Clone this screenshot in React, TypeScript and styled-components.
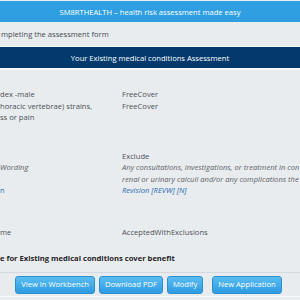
import React from 'react';
import styled, { createGlobalStyle } from 'styled-components';

const GlobalStyle = createGlobalStyle`
  html, body {
    margin: 0;
    padding: 0;
    background: #ffffff;
  }
  body {
    font-family: "Open Sans", "Noto Sans", sans-serif;
  }
`

const Page = styled.div`
  width: 300px;
  height: 300px;
  overflow: hidden;
  padding-top: 1px;
  box-sizing: border-box;
  background: #e9ecef;
  display: flex;
  flex-direction: column;
  font-size: 7.6px;
  color: #4b5055;
`

const Banner = styled.div`
  height: 21px;
  flex-shrink: 0;
  background: #2f9fe1;
  color: #ffffff;
  display: flex;
  align-items: center;
  justify-content: center;
  white-space: nowrap;
`

const Intro = styled.div`
  height: 24px;
  flex-shrink: 0;
  display: flex;
  align-items: center;
  padding-left: 1px;
  white-space: nowrap;
  color: #464b50;
  border-bottom: 1px solid #f4f6f8;
`

const SectionTitle = styled.div`
  height: 21px;
  flex-shrink: 0;
  background: #033a6d;
  color: #ffffff;
  display: flex;
  align-items: center;
  justify-content: center;
  white-space: nowrap;
  border-bottom: 2px solid #f4f6f8;
`

const Details = styled.div`
  flex-shrink: 0;
  display: grid;
  grid-template-columns: 122px 1fr;
  grid-auto-rows: minmax(11.5px, auto);
  line-height: 11.5px;
  padding-top: 19px;
  white-space: nowrap;
`

const Spacer = styled.div<{ $h: number }>`
  grid-column: 1 / -1;
  height: ${(p) => p.$h}px;
`

const Cell = styled.div<{ $italic?: boolean; $link?: boolean }>`
  font-style: ${(p) => (p.$italic ? 'italic' : 'normal')};
  color: ${(p) => (p.$link ? '#2a69b0' : p.$italic ? '#5d6267' : '#4b5055')};
`

const Summary = styled.div`
  flex-shrink: 0;
  margin-top: 14px;
  font-weight: 700;
  color: #1f2327;
  white-space: nowrap;
  line-height: 12px;
`

const Footer = styled.div`
  flex-shrink: 0;
  margin-top: 8px;
  border-top: 1px solid #d6dade;
  border-bottom: 1px solid #f7f8f9;
  display: flex;
  justify-content: center;
  gap: 4px;
  padding: 3px 3px 2px 0;
`

const Button = styled.button<{ $apart?: boolean }>`
  height: 18px;
  padding: 0 5px;
  margin-left: ${(p) => (p.$apart ? '5px' : '0')};
  border: 1px solid #2b90d2;
  border-radius: 3px;
  background: linear-gradient(#5cbdf1, #2c9be1);
  color: #ffffff;
  font-family: inherit;
  font-size: 7.6px;
  line-height: 1;
  white-space: nowrap;
`

const App = () => {
  return (
    <>
      <GlobalStyle />
      <Page>
        <Banner>SM8RTHEALTH – health risk assessment made easy</Banner>
        <Intro>mpleting the assessment form</Intro>
        <SectionTitle>Your Existing medical conditions Assessment</SectionTitle>
        <Details>
          <Cell>dex -male</Cell>
          <Cell>FreeCover</Cell>
          <Cell>horacic vertebrae) strains,</Cell>
          <Cell>FreeCover</Cell>
          <Cell>ss or pain</Cell>
          <Cell />
          <Spacer $h={27} />
          <Cell />
          <Cell>Exclude</Cell>
          <Cell $italic>Wording</Cell>
          <Cell $italic>
            Any consultations, investigations, or treatment in con
            <br />
            renal or urinary calculi and/or any complications the
          </Cell>
          <Cell $link>n</Cell>
          <Cell $link $italic>Revision [REVW] [N]</Cell>
          <Spacer $h={30} />
          <Cell>me</Cell>
          <Cell>AcceptedWithExclusions</Cell>
        </Details>
        <Summary>e for Existing medical conditions cover benefit</Summary>
        <Footer>
          <Button>View in Workbench</Button>
          <Button>Download PDF</Button>
          <Button>Modify</Button>
          <Button $apart>New Application</Button>
        </Footer>
      </Page>
    </>
  );
}

export default App;
